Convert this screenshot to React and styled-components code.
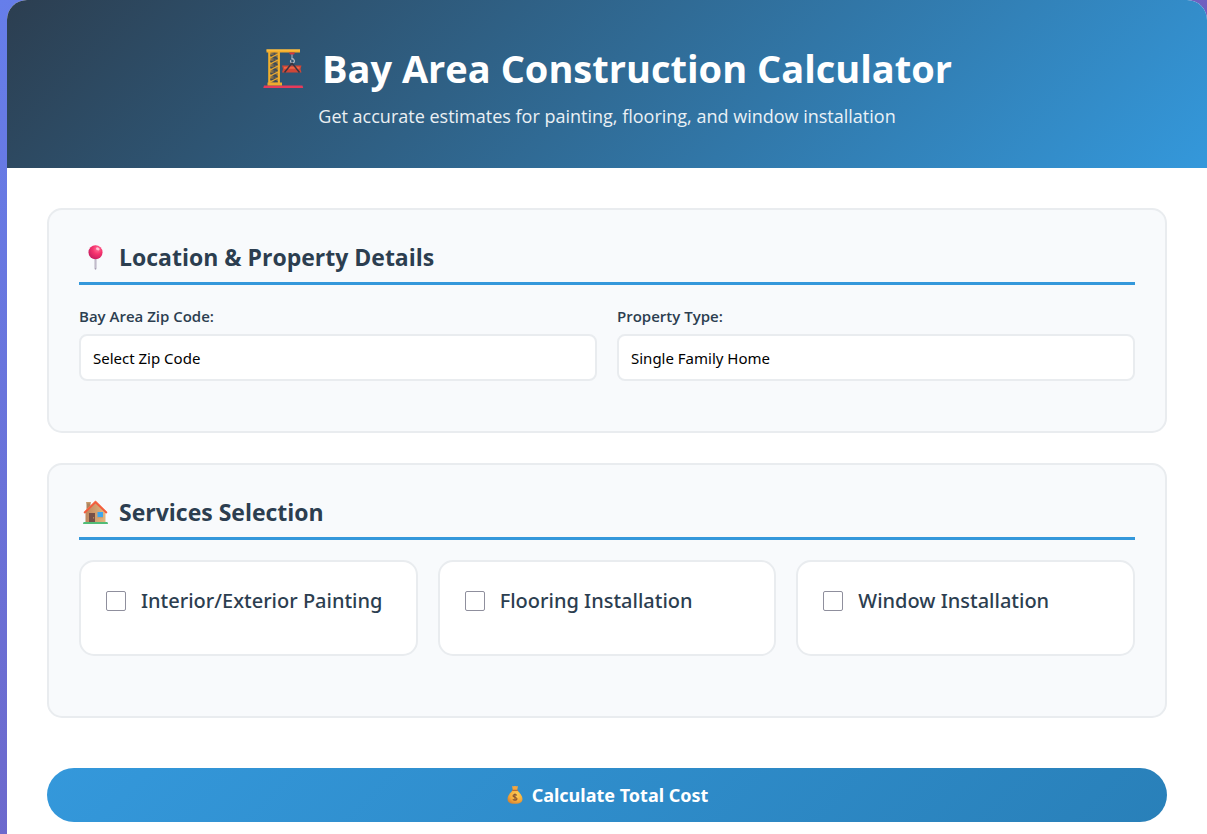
import React from "react";
import styled, { createGlobalStyle } from "styled-components";

const Global = createGlobalStyle`
  *, *::before, *::after { box-sizing: border-box; margin: 0; padding: 0; }
  body {
    font-family: "Segoe UI", "Open Sans", "Noto Sans", sans-serif;
    color: #2c3e50;
    background: linear-gradient(135deg, #667eea 0%, #764ba2 100%);
    min-height: 100vh;
    padding-left: 7px;
  }
`;

const Container = styled.div`
  background: #fff;
  border-radius: 20px 20px 0 0;
  overflow: hidden;
  min-height: 100vh;
`;

const Header = styled.header`
  display: flex;
  flex-direction: column;
  align-items: center;
  padding: 40px 40px 38px;
  color: #fff;
  background: linear-gradient(135deg, #2c3e50 0%, #3498db 100%);
`;

const Title = styled.h1`
  display: flex;
  align-items: center;
  gap: 16px;
  font-size: 38px;
  line-height: 56px;
  font-weight: 700;
`;

const Subtitle = styled.p`
  margin-top: 7px;
  padding-bottom: 1px;
  font-size: 18px;
  line-height: 26px;
  opacity: 0.9;
`;

const Main = styled.main`
  padding: 40px 40px 12px;
`;

const Section = styled.section`
  margin-bottom: 30px;
  padding: 30px;
  background: #f8fafc;
  border: 2px solid #e9ecef;
  border-radius: 15px;
`;

const SectionTitle = styled.h2`
  display: flex;
  align-items: center;
  gap: 8px;
  margin-bottom: 20px;
  padding-bottom: 8px;
  border-bottom: 3px solid #3498db;
  font-size: 23px;
  line-height: 34px;
  font-weight: 700;
`;

const FormGrid = styled.div`
  display: grid;
  grid-template-columns: 1fr 1fr;
  gap: 20px;
`;

const Field = styled.div`
  display: flex;
  flex-direction: column;
  gap: 6px;
  margin-bottom: 20px;
`;

const Label = styled.label`
  font-size: 15px;
  line-height: 23px;
  font-weight: 600;
`;

const Select = styled.select`
  appearance: none;
  width: 100%;
  height: 47px;
  padding: 0 12px;
  font-family: Tahoma, "Noto Sans", sans-serif;
  font-size: 15px;
  color: #000;
  background: #fff;
  border: 2px solid #e9ecef;
  border-radius: 8px;
`;

const ServiceGrid = styled.div`
  display: grid;
  grid-template-columns: repeat(3, 1fr);
  gap: 20px;
  margin-bottom: 30px;
`;

const ServiceCard = styled.div`
  padding: 25px;
  background: #fff;
  border: 2px solid #e9ecef;
  border-radius: 15px;
`;

const ServiceLabel = styled.label`
  display: flex;
  align-items: center;
  gap: 15px;
  margin-bottom: 14px;
  font-family: "Segoe UI", "Noto Sans", sans-serif;
  font-size: 20px;
  line-height: 28px;
  font-weight: 500;
  white-space: nowrap;
`;

const Checkbox = styled.input`
  appearance: none;
  flex: none;
  width: 20px;
  height: 20px;
  background: #fff;
  border: 1px solid #8f8f9d;
  border-radius: 2px;

  &:checked {
    background: #3498db;
    box-shadow: inset 0 0 0 3px #fff;
  }
`;

const CalculateButton = styled.button`
  display: flex;
  align-items: center;
  justify-content: center;
  gap: 8px;
  width: 100%;
  height: 54px;
  margin-top: 50px;
  border: 0;
  border-radius: 50px;
  color: #fff;
  background: linear-gradient(135deg, #3498db 0%, #2980b9 100%);
  font-family: Tahoma, "Noto Sans", sans-serif;
  font-size: 18px;
  font-weight: 700;
  cursor: pointer;
`;

const Icon = styled.svg`
  display: block;
  flex: none;
  width: ${(p) => p.$size}px;
  height: ${(p) => p.$size}px;
`;

const CraneIcon = () => (
  <Icon $size={44} viewBox="0 0 44 44" aria-hidden="true">
    <defs>
      <linearGradient id="mast" x1="0" x2="1">
        <stop offset="0" stopColor="#c99335" />
        <stop offset="0.5" stopColor="#4f5358" />
        <stop offset="1" stopColor="#c99335" />
      </linearGradient>
    </defs>
    <path d="M2 39.4h38.5l.7 2.6H1.3z" fill="#e63a5b" />
    <path d="M7 5h11v32H7z" fill="url(#mast)" />
    <path d="M8 9l8 4M8 15l8 4M8 21l8 4M8 27l8 4M8 33l8 3" stroke="#3b4a58" strokeWidth="1.8" />
    <path d="M8 12l8-4M8 18l8-4M8 24l8-4M8 30l8-4M8 36l8-4" stroke="#efad30" strokeWidth="1.1" />
    <path d="M7.2 5v32M16.8 5v32" stroke="#f0b02d" strokeWidth="2" />
    <path d="M4.5 3.5h33.5v3H4.5z" fill="#f5ae2b" />
    <path d="M4.5 3.5h33.5v1H4.5z" fill="#ffc34b" />
    <path d="M5.5 36.5h14.5v3H5.5z" fill="#ecab2e" />
    <path d="M27 6.5h6l-1 2h-4z" fill="#d5343d" />
    <path d="M30 8.5v5" stroke="#b7b8c2" strokeWidth="1" />
    <path d="M29.6 12.5c3 0 4 4 1 4.4-2 0-2.6-1.6-1.6-2.6" fill="none" stroke="#aeb3be" strokeWidth="1.3" />
    <path d="M20 19.5h19.5L38.5 23l1 3.5H20l1-3.5z" fill="#cf4637" />
    <path d="M22 20.8h15.5v2H22z" fill="#ef6545" />
    <path d="M30 17l-7.5 9.5M30 17l7.5 9.5" fill="none" stroke="#3b3540" strokeWidth="1.5" />
  </Icon>
);

const PinIcon = () => (
  <Icon $size={32} viewBox="0 0 32 32" aria-hidden="true">
    <defs>
      <radialGradient id="pinHead" cx="0.65" cy="0.28" r="0.75">
        <stop offset="0" stopColor="#ff739b" />
        <stop offset="0.45" stopColor="#f7346e" />
        <stop offset="1" stopColor="#c91e61" />
      </radialGradient>
    </defs>
    <path d="M15.6 17h1.8v11q-.9 1.4-1.8 0z" fill="#a7a0b3" />
    <path d="M16.7 17v10" stroke="#d5cedd" strokeWidth="0.7" />
    <circle cx="16.5" cy="11.3" r="7" fill="url(#pinHead)" />
    <ellipse cx="18.8" cy="7.9" rx="1.9" ry="1.4" fill="#ffc3d2" transform="rotate(30 18.8 7.9)" />
  </Icon>
);

const HouseIcon = () => (
  <Icon $size={32} viewBox="0 0 32 32" aria-hidden="true">
    <defs>
      <linearGradient id="wall" x1="0" x2="1">
        <stop offset="0" stopColor="#bd875e" />
        <stop offset="1" stopColor="#e5b77e" />
      </linearGradient>
    </defs>
    <path d="M7.5 6.5h4V15h-4z" fill="#ae835d" />
    <path d="M7.2 6h4.6v1.4H7.2z" fill="#ca9b6b" />
    <path d="M16.5 6.5L6.5 16v10.5h20V16z" fill="url(#wall)" />
    <path d="M5.2 17L16.5 6l11.3 11" fill="none" stroke="#f15b3e" strokeWidth="2" strokeLinejoin="round" />
    <path d="M5 16L16.5 5l11.5 11" fill="none" stroke="#ff8254" strokeWidth="0.6" />
    <path d="M10 17h6v9.5h-6z" fill="#765047" />
    <circle cx="14.6" cy="21.8" r="0.6" fill="#d9a866" />
    <path d="M18.5 16h5.5v5.5h-5.5z" fill="#3da7ed" />
    <path d="M18.5 21.7h5.5" stroke="#d99b60" strokeWidth="1" />
    <path d="M5 26h23q1 0 1 2H4q0-2 1-2z" fill="#51bc77" />
  </Icon>
);

const MoneyBagIcon = () => (
  <Icon $size={18} viewBox="0 0 18 18" aria-hidden="true">
    <defs>
      <radialGradient id="bag" cx="0.62" cy="0.35" r="0.7">
        <stop offset="0" stopColor="#ffd057" />
        <stop offset="0.6" stopColor="#f6ae3c" />
        <stop offset="1" stopColor="#d88632" />
      </radialGradient>
    </defs>
    <path d="M6 0q1.5.8 3-.3 1.5 1.1 3 .3L11 5H7z" fill="#f3a640" />
    <path d="M7 4h4c3 3 5.5 6 5.5 9S14.5 17.8 9 17.8 1.5 16 1.5 13 4 7 7 4z" fill="url(#bag)" />
    <path d="M6.7 4.3h4.6" stroke="#b76d37" strokeWidth="1.3" strokeLinecap="round" />
    <path d="M11 9.3C9.5 8 7 8.5 7 10s4 1.1 4 2.8-2.8 2-4.2.6M9 7.6v7.2" fill="none" stroke="#855232" strokeWidth="1.1" />
  </Icon>
);

const zipCodes = ["Select Zip Code", "94102", "94301", "94538", "94601", "95112"];
const propertyTypes = ["Single Family Home", "Condominium", "Townhouse", "Apartment"];
const services = ["Interior/Exterior Painting", "Flooring Installation", "Window Installation"];

const SelectField = ({ id, label, options }) => (
  <Field>
    <Label htmlFor={id}>{label}</Label>
    <Select id={id}>
      {options.map((option) => (
        <option key={option}>{option}</option>
      ))}
    </Select>
  </Field>
);

export default function App() {
  return (
    <>
      <Global />
      <Container>
        <Header>
          <Title>
            <CraneIcon />
            Bay Area Construction Calculator
          </Title>
          <Subtitle>Get accurate estimates for painting, flooring, and window installation</Subtitle>
        </Header>
        <Main>
          <Section>
            <SectionTitle>
              <PinIcon />
              Location &amp; Property Details
            </SectionTitle>
            <FormGrid>
              <SelectField id="zip" label="Bay Area Zip Code:" options={zipCodes} />
              <SelectField id="property" label="Property Type:" options={propertyTypes} />
            </FormGrid>
          </Section>
          <Section>
            <SectionTitle>
              <HouseIcon />
              Services Selection
            </SectionTitle>
            <ServiceGrid>
              {services.map((service) => (
                <ServiceCard key={service}>
                  <ServiceLabel>
                    <Checkbox type="checkbox" />
                    {service}
                  </ServiceLabel>
                </ServiceCard>
              ))}
            </ServiceGrid>
          </Section>
          <CalculateButton type="button">
            <MoneyBagIcon />
            Calculate Total Cost
          </CalculateButton>
        </Main>
      </Container>
    </>
  );
}
